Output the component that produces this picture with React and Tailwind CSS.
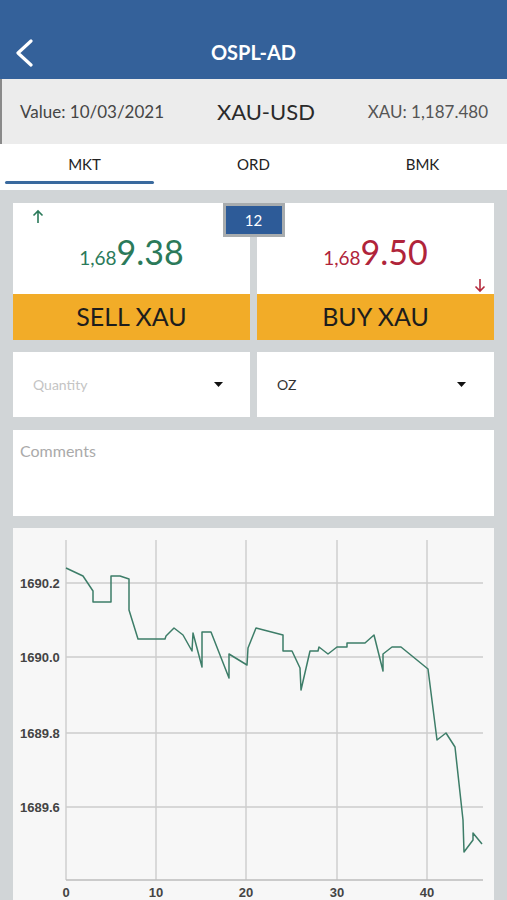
import React from 'react';

const font = { fontFamily: 'Lato, "Open Sans", sans-serif' };

const LINE = [
  [66, 568], [83, 576], [93, 591], [93, 602], [111, 602], [111, 576], [120, 576], [129, 579],
  [129, 610], [138, 639], [165, 639], [166, 636], [174, 628], [183, 635], [192, 651], [193, 633],
  [202, 667], [202, 632], [211, 632], [229, 678], [229, 654], [247, 665], [248, 648], [256, 628],
  [283, 635], [283, 651], [292, 651], [300, 668], [301, 690], [310, 651], [318, 651], [319, 647],
  [328, 654], [337, 647], [347, 647], [347, 643], [365, 643], [374, 635], [383, 671], [383, 654],
  [392, 647], [401, 647], [428, 669], [437, 740], [446, 733], [455, 747], [463, 820], [464, 852],
  [473, 840], [473, 833], [482, 844],
];

const XS = [66, 156, 246, 337, 427];
const YS = [
  { y: 583, label: '1690.2' },
  { y: 657, label: '1690.0' },
  { y: 733, label: '1689.8' },
  { y: 807, label: '1689.6' },
];

function Caret() {
  return (
    <svg width="9" height="5" viewBox="0 0 9 5">
      <path d="M0 0h9L4.5 5z" fill="#111" />
    </svg>
  );
}

function Chart() {
  return (
    <div className="bg-[#f7f7f7] h-[380px] overflow-hidden">
      <svg width="481" height="380" viewBox="13 528 481 380">
        {XS.map((x) => (
          <line key={x} x1={x} y1={540} x2={x} y2={880} stroke="#c9c9c9" strokeWidth="1.3" />
        ))}
        {YS.map((r) => (
          <line key={r.y} x1={66} y1={r.y} x2={483} y2={r.y} stroke="#cdcdcd" strokeWidth="1.3" />
        ))}
        <line x1={66} y1={880} x2={483} y2={880} stroke="#bdbdbd" strokeWidth="1.3" />
        {YS.map((r) => (
          <text key={r.label} x={20} y={r.y + 5} fontSize="13" fill="#444" fontWeight="600"
            fontFamily='"Liberation Sans", Arial, sans-serif'>{r.label}</text>
        ))}
        {XS.map((x, i) => (
          <text key={x} x={x} y={897} fontSize="13" fill="#444" fontWeight="600" textAnchor="middle"
            fontFamily='"Liberation Sans", Arial, sans-serif'>{i * 10}</text>
        ))}
        <polyline points={LINE.map((p) => p.join(',')).join(' ')} fill="none" stroke="#3d7d68"
          strokeWidth="1.5" strokeLinejoin="round" />
      </svg>
    </div>
  );
}

export default function App() {
  return (
    <div className="min-h-screen bg-[#d1d5d7]" style={font}>
      {/* header */}
      <div className="h-[79px] bg-[#34619a] relative flex items-end justify-center pb-[17px]">
        <svg className="absolute left-[13px] top-[39px]" width="22" height="28" viewBox="0 0 22 28">
          <polyline points="18,2 5,14 18,26" fill="none" stroke="#fff" strokeWidth="3.2" strokeLinecap="round" strokeLinejoin="round" />
        </svg>
        <span className="text-white text-[20px] font-bold leading-none">OSPL-AD</span>
      </div>

      {/* info bar */}
      <div className="h-[65px] bg-[#ececec] border-l-2 border-[#8a8a8a] flex items-center justify-between pl-[18px] pr-[19px]">
        <span className="text-[17px] text-[#454545]">Value: 10/03/2021</span>
        <span className="text-[22px] text-[#2a2a2a]">XAU-USD</span>
        <span className="text-[17px] text-[#555]">XAU: 1,187.480</span>
      </div>

      {/* tabs */}
      <div className="h-[46px] bg-white grid grid-cols-3">
        <div className="relative flex items-center justify-center pb-[5px] text-[15px] text-[#222]">
          MKT
          <div className="absolute left-[5px] right-[15px] bottom-[6px] h-[3px] rounded-full bg-[#3a6a9e]" />
        </div>
        <div className="flex items-center justify-center pb-[5px] text-[15px] text-[#222]">ORD</div>
        <div className="flex items-center justify-center pb-[5px] text-[15px] text-[#222]">BMK</div>
      </div>

      <div className="px-[13px] pt-[13px]">
        {/* prices */}
        <div className="relative grid grid-cols-2 gap-[7px]">
          <div>
            <div className="h-[91px] bg-white relative flex items-center justify-center pt-[7px]">
              <svg className="absolute left-[19px] top-[6px]" width="12" height="15" viewBox="0 0 12 15">
                <path d="M6 14V2M1.5 6.5L6 2l4.5 4.5" fill="none" stroke="#2b7a5a" strokeWidth="1.6" />
              </svg>
              <span className="text-[#2b7a5a] leading-none">
                <span className="text-[19px]">1,68</span>
                <span className="text-[34px]">9.38</span>
              </span>
            </div>
            <div className="h-[46px] bg-[#f2ac28] flex items-center justify-center text-[25px] text-[#1d1d1d]">SELL XAU</div>
          </div>
          <div>
            <div className="h-[91px] bg-white relative flex items-center justify-center pt-[7px]">
              <svg className="absolute right-[8px] bottom-[1px]" width="12" height="15" viewBox="0 0 12 15">
                <path d="M6 1v12M1.5 8.5L6 13l4.5-4.5" fill="none" stroke="#b52a3c" strokeWidth="1.6" />
              </svg>
              <span className="text-[#b0243a] leading-none">
                <span className="text-[19px]">1,68</span>
                <span className="text-[34px]">9.50</span>
              </span>
            </div>
            <div className="h-[46px] bg-[#f2ac28] flex items-center justify-center text-[25px] text-[#1d1d1d]">BUY XAU</div>
          </div>
          <div className="absolute left-1/2 -translate-x-1/2 top-0 w-[62px] h-[34px] border-[3px] border-[#a8acae] bg-[#2d5b98] flex items-center justify-center text-white text-[15px]">
            12
          </div>
        </div>

        {/* dropdowns */}
        <div className="grid grid-cols-2 gap-[7px] mt-[12px]">
          <div className="h-[65px] bg-white flex items-center justify-between pl-[20px] pr-[27px]">
            <span className="text-[14px] text-[#c4c4c4]">Quantity</span>
            <Caret />
          </div>
          <div className="h-[65px] bg-white flex items-center justify-between pl-[20px] pr-[28px]">
            <span className="text-[14px] text-[#333]">OZ</span>
            <Caret />
          </div>
        </div>

        {/* comments */}
        <div className="h-[86px] bg-white mt-[13px] pl-[7px] pt-[9px]">
          <span className="text-[16px] text-[#aaa]">Comments</span>
        </div>

        <div className="mt-[12px]">
          <Chart />
        </div>
      </div>
    </div>
  );
}
